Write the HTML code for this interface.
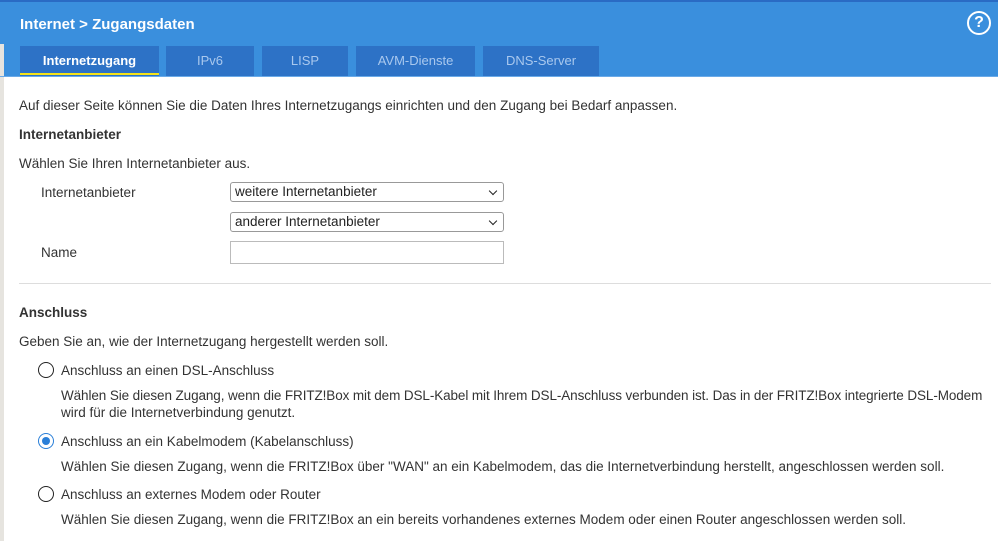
<!DOCTYPE html>
<html><head><meta charset="utf-8"><style>
body{margin:0;width:998px;height:541px;overflow:hidden;background:#fff;font-family:"Liberation Sans",sans-serif;color:#333;position:relative}
.hd{position:absolute;left:0;top:0;width:998px;height:77px;background:#3a8fdd;border-top:2px solid #2a6bc4;box-sizing:border-box}
.strip{position:absolute;left:0;top:44px;width:4px;height:497px;background:#e6e4df}
.t{position:absolute;white-space:nowrap;font-size:13.5px;line-height:18px;margin-top:1px}
.tab{position:absolute;top:46px;height:31px;background:#2d72c6;color:#a9c8ee;font-size:13px;text-align:center;line-height:29px}
.sel{position:absolute;left:230px;width:274px;height:20px;border:1px solid #999;border-radius:3px;box-sizing:border-box;font-size:13.5px;line-height:18px;padding-left:4px;color:#222}
.sel:after{content:"";position:absolute;right:7px;top:5px;width:5px;height:5px;border-right:1.5px solid #222;border-bottom:1.5px solid #222;transform:rotate(45deg)}
.rad{position:absolute;left:38px;width:16px;height:16px;border:1.5px solid #222;border-radius:50%;box-sizing:border-box}
</style></head><body>
<div class="hd"></div>
<div class="strip"></div>
<div class="t" style="left:20px;top:15px;color:#fff;font-size:15px;font-weight:bold">Internet &gt; Zugangsdaten</div>
<div style="position:absolute;left:967px;top:11px;width:20px;height:20px;border:2px solid #fff;border-radius:50%;color:#fff;font-weight:bold;font-size:16px;text-align:center;line-height:20px">?</div>
<div class="tab" style="left:20px;width:139px;color:#fff;font-weight:bold">Internetzugang<div style="position:absolute;left:0;bottom:2px;width:139px;height:2px;background:#f5e31a"></div></div>
<div class="tab" style="left:166px;width:88px">IPv6</div>
<div class="tab" style="left:262px;width:86px">LISP</div>
<div class="tab" style="left:356px;width:119px">AVM-Dienste</div>
<div class="tab" style="left:483px;width:116px">DNS-Server</div>
<div style="position:absolute;left:0;top:76px;width:998px;height:1px;background:#6aaae8"></div>

<div class="t" style="left:19px;top:96px">Auf dieser Seite können Sie die Daten Ihres Internetzugangs einrichten und den Zugang bei Bedarf anpassen.</div>
<div class="t" style="left:19px;top:125px;font-weight:bold">Internetanbieter</div>
<div class="t" style="left:19px;top:154px">Wählen Sie Ihren Internetanbieter aus.</div>
<div class="t" style="left:41px;top:183px">Internetanbieter</div>
<div class="sel" style="top:182px">weitere Internetanbieter</div>
<div class="sel" style="top:212px">anderer Internetanbieter</div>
<div class="t" style="left:41px;top:243px">Name</div>
<div style="position:absolute;left:230px;top:241px;width:274px;height:23px;border:1px solid #bbb;box-sizing:border-box"></div>
<div style="position:absolute;left:19px;top:283px;width:972px;height:1px;background:#ddd"></div>
<div class="t" style="left:19px;top:303px;font-weight:bold">Anschluss</div>
<div class="t" style="left:19px;top:332px">Geben Sie an, wie der Internetzugang hergestellt werden soll.</div>
<div class="rad" style="top:362px"></div>
<div class="t" style="left:61px;top:361px">Anschluss an einen DSL-Anschluss</div>
<div class="t" style="left:61px;top:386px;letter-spacing:-0.1px">Wählen Sie diesen Zugang, wenn die FRITZ!Box mit dem DSL-Kabel mit Ihrem DSL-Anschluss verbunden ist. Das in der FRITZ!Box integrierte DSL-Modem</div>
<div class="t" style="left:61px;top:403px">wird für die Internetverbindung genutzt.</div>
<div class="rad" style="top:433px;border-color:#2a7fd8"><div style="position:absolute;left:2.5px;top:2.5px;width:8px;height:8px;border-radius:50%;background:#2a7fd8"></div></div>
<div class="t" style="left:61px;top:432px">Anschluss an ein Kabelmodem (Kabelanschluss)</div>
<div class="t" style="left:61px;top:457px">Wählen Sie diesen Zugang, wenn die FRITZ!Box über "WAN" an ein Kabelmodem, das die Internetverbindung herstellt, angeschlossen werden soll.</div>
<div class="rad" style="top:486px"></div>
<div class="t" style="left:61px;top:485px">Anschluss an externes Modem oder Router</div>
<div class="t" style="left:61px;top:510px">Wählen Sie diesen Zugang, wenn die FRITZ!Box an ein bereits vorhandenes externes Modem oder einen Router angeschlossen werden soll.</div>
</body></html>
